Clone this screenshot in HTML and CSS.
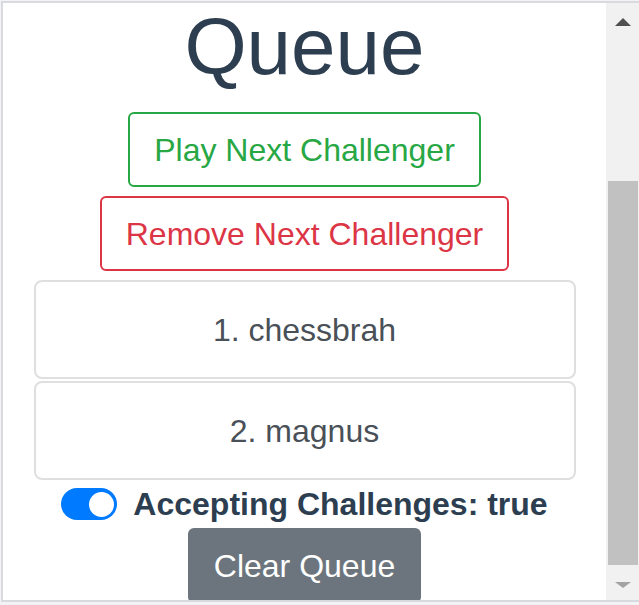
FILE: index.html
```html
<!DOCTYPE html>
<html lang="en">
<head>
<meta charset="utf-8">
<title>Queue</title>
<link rel="stylesheet" href="styles.css">
</head>
<body>
<div class="frame">
  <div class="viewport">
    <h1 class="title">Queue</h1>
    <button class="btn btn-green">Play Next Challenger</button>
    <button class="btn btn-red">Remove Next Challenger</button>
    <ul class="queue">
      <li class="queue-item">1. chessbrah</li>
      <li class="queue-item">2. magnus</li>
    </ul>
    <div class="toggle-row">
      <span class="toggle"><span class="knob"></span></span>
      <span class="toggle-label">Accepting Challenges: true</span>
    </div>
    <button class="btn btn-gray">Clear Queue</button>
  </div>
  <div class="scrollbar">
    <div class="arrow-up"></div>
    <div class="thumb"></div>
    <div class="arrow-down"></div>
  </div>
</div>
</body>
</html>
```
FILE: styles.css
```css
html, body {
  margin: 0;
  padding: 0;
  overflow: hidden;
}
body {
  background: #f3f3f5;
  width: 639px;
  height: 605px;
}
.frame {
  box-sizing: border-box;
  margin: 1px 0 0 1px;
  width: 642px;
  height: 601px;
  border: 2px solid #d9d9e0;
  background: #ffffff;
  display: flex;
}
.viewport {
  width: 603px;
  flex: none;
  overflow: hidden;
  display: flex;
  flex-direction: column;
  align-items: center;
  font-family: "Liberation Sans", Arial, sans-serif;
  color: #2c3e50;
}
.title {
  font-size: 80px;
  font-weight: normal;
  line-height: 80px;
  margin: 4px 0 25px;
  color: #2c3e50;
}
.btn {
  flex: none;
  font-family: "Liberation Sans", Arial, sans-serif;
  font-size: 32px;
  line-height: 48px;
  padding: 11.5px 24px;
  border: 2px solid;
  border-radius: 6px;
  background: #ffffff;
  margin: 0 0 9px;
}
.btn-green {
  color: #28a745;
  border-color: #28a745;
}
.btn-red {
  color: #dc3545;
  border-color: #dc3545;
}
.btn-gray {
  color: #ffffff;
  background: #6c757d;
  border-color: #6c757d;
  margin: 0;
}
.queue {
  list-style: none;
  margin: 0;
  padding: 0;
  width: 542px;
  display: flex;
  flex-direction: column;
  gap: 2px;
}
.queue-item {
  border: 2px solid #dfdfdf;
  border-radius: 8px;
  padding: 23.5px;
  font-size: 32px;
  line-height: 48px;
  color: #495057;
  text-align: center;
}
.toggle-row {
  display: flex;
  align-items: center;
  justify-content: center;
  gap: 16px;
  height: 48px;
}
.toggle {
  width: 56px;
  height: 32px;
  border-radius: 16px;
  background: #007bff;
  display: flex;
  align-items: center;
  justify-content: flex-end;
  box-sizing: border-box;
  padding-right: 3px;
}
.knob {
  width: 25px;
  height: 25px;
  border-radius: 50%;
  background: #ffffff;
}
.toggle-label {
  font-size: 32px;
  font-weight: bold;
  line-height: 48px;
  color: #2c3e50;
}
.scrollbar {
  flex: none;
  width: 34px;
  background: #f1f1f1;
  display: flex;
  flex-direction: column;
  align-items: center;
}
.arrow-up {
  margin-top: 15px;
  width: 0;
  height: 0;
  border-left: 8.5px solid transparent;
  border-right: 8.5px solid transparent;
  border-bottom: 8px solid #505050;
}
.thumb {
  margin-top: 155px;
  width: 30px;
  height: 384px;
  background: #c1c1c1;
}
.arrow-down {
  margin-top: 17px;
  width: 0;
  height: 0;
  border-left: 8.5px solid transparent;
  border-right: 8.5px solid transparent;
  border-top: 6px solid #a3a3a3;
}
```
